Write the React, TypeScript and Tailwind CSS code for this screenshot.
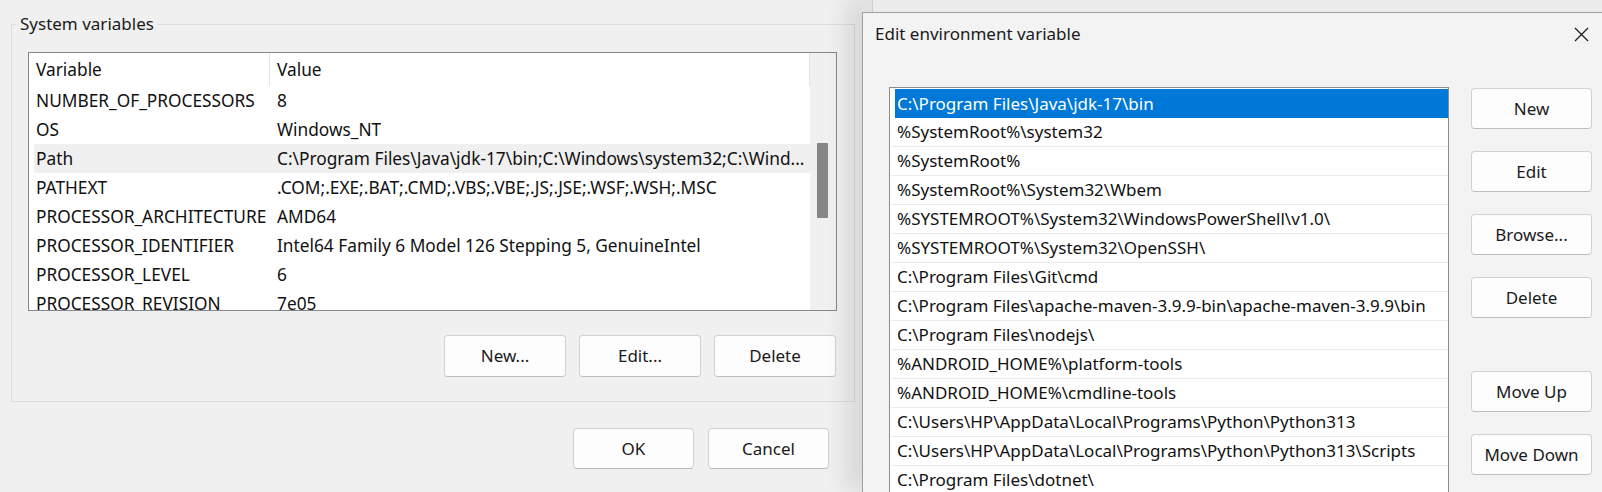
import React from 'react';

const sysVars = [
  { name: 'NUMBER_OF_PROCESSORS', value: '8' },
  { name: 'OS', value: 'Windows_NT' },
  { name: 'Path', value: 'C:\\Program Files\\Java\\jdk-17\\bin;C:\\Windows\\system32;C:\\Wind...' },
  { name: 'PATHEXT', value: '.COM;.EXE;.BAT;.CMD;.VBS;.VBE;.JS;.JSE;.WSF;.WSH;.MSC' },
  { name: 'PROCESSOR_ARCHITECTURE', value: 'AMD64' },
  { name: 'PROCESSOR_IDENTIFIER', value: 'Intel64 Family 6 Model 126 Stepping 5, GenuineIntel' },
  { name: 'PROCESSOR_LEVEL', value: '6' },
  { name: 'PROCESSOR_REVISION', value: '7e05' },
];

const pathEntries = [
  'C:\\Program Files\\Java\\jdk-17\\bin',
  '%SystemRoot%\\system32',
  '%SystemRoot%',
  '%SystemRoot%\\System32\\Wbem',
  '%SYSTEMROOT%\\System32\\WindowsPowerShell\\v1.0\\',
  '%SYSTEMROOT%\\System32\\OpenSSH\\',
  'C:\\Program Files\\Git\\cmd',
  'C:\\Program Files\\apache-maven-3.9.9-bin\\apache-maven-3.9.9\\bin',
  'C:\\Program Files\\nodejs\\',
  '%ANDROID_HOME%\\platform-tools',
  '%ANDROID_HOME%\\cmdline-tools',
  'C:\\Users\\HP\\AppData\\Local\\Programs\\Python\\Python313',
  'C:\\Users\\HP\\AppData\\Local\\Programs\\Python\\Python313\\Scripts',
  'C:\\Program Files\\dotnet\\',
];

const WinButton = ({ label, w = 'w-[122px]', h = 'h-[42px]' }: { label: string; w?: string; h?: string }) => (
  <button
    className={`${w} ${h} shrink-0 rounded-[4px] border border-[#d1d1d1] border-b-[#bdbdbd] bg-[#fdfdfd] text-[17px] text-[#1a1a1a]`}
  >
    {label}
  </button>
);

const App = () => {
  return (
    <div className="flex h-[492px] w-[1602px] overflow-hidden bg-[#f0f0f0] font-['Noto_Sans',sans-serif] text-[17px] text-[#111]">
      {/* Environment Variables dialog (behind) */}
      <div className="flex w-[862px] shrink-0 flex-col">
        <fieldset className="ml-[11px] mt-[12px] h-[390px] w-[844px] border border-[#dcdcdc]">
          <legend className="ml-[4px] px-[4px] leading-[24px] text-[#1a1a1a]">System variables</legend>

          <div className="ml-[16px] mt-[16px] flex h-[259px] w-[809px] border border-[#828790] bg-white text-[17.3px]">
            <div className="flex min-w-0 flex-1 flex-col overflow-hidden">
              {/* header */}
              <div className="flex h-[33px] shrink-0 items-center border-r border-[#e5e5e5]">
                <div className="flex h-full w-[241px] items-center border-r border-[#e5e5e5] pl-[7px]">Variable</div>
                <div className="pl-[7px]">Value</div>
              </div>
              {/* rows */}
              {sysVars.map((v) => (
                <div
                  key={v.name}
                  className={`ml-[5px] flex h-[29px] shrink-0 items-center whitespace-nowrap ${v.name === 'Path' ? 'bg-[#f0f0f0]' : ''}`}
                >
                  <div className="w-[236px] pl-[2px]">{v.name}</div>
                  <div className="overflow-hidden pl-[7px]">{v.value}</div>
                </div>
              ))}
            </div>
            {/* scrollbar */}
            <div className="w-[26px] shrink-0 bg-[#f0f0f0] pl-[7px] pt-[90px]">
              <div className="h-[75px] w-[11px] rounded-[1px] bg-[#868686]" />
            </div>
          </div>

          <div className="mr-[18px] mt-[24px] flex justify-end gap-[13px]">
            <WinButton label="New..." />
            <WinButton label="Edit..." />
            <WinButton label="Delete" />
          </div>
        </fieldset>

        <div className="mr-[33px] mt-[26px] flex justify-end gap-[14px]">
          <WinButton label="OK" w="w-[121px]" h="h-[41px]" />
          <WinButton label="Cancel" w="w-[121px]" h="h-[41px]" />
        </div>
      </div>

      {/* Edit environment variable dialog (front) */}
      <div className="relative z-10 flex flex-1 flex-col shadow-[-16px_0_22px_rgba(0,0,0,0.10)]">
        <div className="flex h-[12px] shrink-0 bg-[#ececec]">
          <div className="w-[11px] border-r border-[#cfcfcf] bg-[#e2e2e2]" />
        </div>
        <div className="flex-1 border-l border-t border-[#a0a0a0] bg-[#f3f3f3]">
          <div className="flex h-[42px] items-center justify-between pl-[12px] pr-[12px]">
            <span className="text-[#1a1a1a]">Edit environment variable</span>
            <svg width="15" height="15" viewBox="0 0 15 15" className="mr-[1px]">
              <path d="M1 1 L14 14 M14 1 L1 14" stroke="#1f1f1f" strokeWidth="1.3" fill="none" />
            </svg>
          </div>

          <div className="flex pl-[26px] pt-[32px]">
            <div className="h-[420px] w-[560px] shrink-0 overflow-hidden border border-[#8c8c8c] bg-white pt-[1px]">
              {pathEntries.map((p, i) => (
                <div
                  key={p}
                  className={`flex h-[29px] items-center whitespace-nowrap ${
                    i === 0 ? 'ml-[5px] bg-[#0078d7] pl-[2px] text-white' : 'ml-[1px] border-b border-[#ebebeb] pl-[6px]'
                  }`}
                >
                  {p}
                </div>
              ))}
            </div>

            <div className="ml-[22px] mt-[1px] flex flex-col gap-[22px]">
              <WinButton label="New" w="w-[121px]" h="h-[41px]" />
              <WinButton label="Edit" w="w-[121px]" h="h-[41px]" />
              <WinButton label="Browse..." w="w-[121px]" h="h-[41px]" />
              <WinButton label="Delete" w="w-[121px]" h="h-[41px]" />
              <div className="mt-[31px] flex flex-col gap-[22px]">
                <WinButton label="Move Up" w="w-[121px]" h="h-[41px]" />
                <WinButton label="Move Down" w="w-[121px]" h="h-[41px]" />
              </div>
            </div>
          </div>
        </div>
      </div>
    </div>
  );
};

export default App;
